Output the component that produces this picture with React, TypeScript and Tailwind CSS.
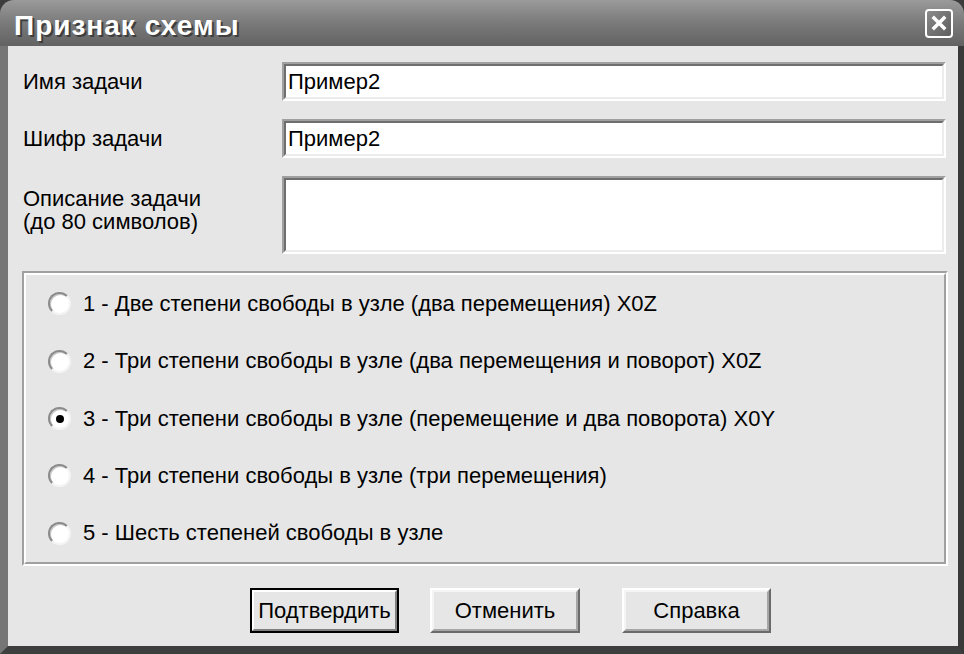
import React from 'react';

const font = { fontFamily: '"Liberation Sans", "DejaVu Sans", sans-serif' };

function Sunken({ children, className = '' }: { children?: React.ReactNode; className?: string }) {
    return (
        <div className={`border-2 border-t-[#a0a0a0] border-l-[#a0a0a0] border-b-white border-r-white ${className}`}>
            <div className="h-full border-2 border-t-[#6e6e6e] border-l-[#6e6e6e] border-b-[#ececec] border-r-[#ececec] bg-white flex items-center px-[2px]">
                {children}
            </div>
        </div>
    );
}

function Radio({ label, checked }: { label: string; checked?: boolean }) {
    return (
        <div className="h-[59px] flex items-center pl-[22px]">
            <div className="w-[23px] h-[23px] rounded-full border-2 border-t-[#8a8a8a] border-l-[#8a8a8a] border-b-[#f4f4f4] border-r-[#f4f4f4] bg-white flex items-center justify-center shadow-[inset_1px_1px_0_#c8c8c8]">
                {checked && <div className="w-[8px] h-[8px] rounded-full bg-black" />}
            </div>
            <span className="ml-[12px] text-[22px] text-black leading-none">{label}</span>
        </div>
    );
}

function Button({ label, isDefault, className = '' }: { label: string; isDefault?: boolean; className?: string }) {
    if (isDefault) {
        return (
            <div className={`h-[45px] border-2 border-black ${className}`}>
                <div className="h-full border-2 border-t-white border-l-white border-b-[#808080] border-r-[#808080] bg-[#e6e6e6] flex items-center justify-center text-[22px]">
                    {label}
                </div>
            </div>
        );
    }
    return (
        <div className={`h-[45px] border-2 border-t-white border-l-white border-b-[#6a6a6a] border-r-[#6a6a6a] ${className}`}>
            <div className="h-full border-2 border-t-[#f4f4f4] border-l-[#f4f4f4] border-b-[#a6a6a6] border-r-[#a6a6a6] bg-[#e6e6e6] flex items-center justify-center text-[22px]">
                {label}
            </div>
        </div>
    );
}

export default function App() {
    const options = [
        '1 - Две степени свободы в узле (два перемещения) X0Z',
        '2 - Три степени свободы в узле (два перемещения и поворот) X0Z',
        '3 - Три степени свободы в узле (перемещение и два поворота) X0Y',
        '4 - Три степени свободы в узле (три перемещения)',
        '5 - Шесть степеней свободы в узле',
    ];

    return (
        <div className="w-[964px] h-[654px] flex flex-col bg-[#3c3c3c] text-black overflow-hidden" style={font}>
            {/* title bar */}
            <div className="h-[46px] flex items-center rounded-t-[14px] bg-gradient-to-b from-[#9a9a9a] via-[#7a7a7a] to-[#626262] pl-[14px] pr-[11px]">
                <span className="text-white font-bold text-[28px] tracking-[1px] leading-none pt-[6px] [text-shadow:2px_2px_0_#3e3e3e] flex-1">
                    Признак схемы
                </span>
                <div className="w-[28px] h-[29px] rounded-[4px] border-2 border-white bg-gradient-to-br from-[#8a8a8a] to-[#5e5e5e] flex items-center justify-center">
                    <svg width="16" height="16" viewBox="0 0 16 16">
                        <path d="M3 3 L13 13 M13 3 L3 13" stroke="white" strokeWidth="3.5" strokeLinecap="square" />
                    </svg>
                </div>
            </div>

            {/* body */}
            <div className="flex-1 flex border-l-[8px] border-l-[#767676] border-r-[6px] border-r-[#3a3a3a] border-b-[8px] border-b-[#3e3e3e]">
                <div className="flex-1 bg-[#e6e6e6] pt-[16px] pl-[14px] pr-[12px] flex flex-col">
                    <div className="flex items-center h-[39px]">
                        <div className="w-[260px] pl-[1px] text-[22px]">Имя задачи</div>
                        <Sunken className="flex-1 h-[39px]">
                            <span className="text-[22px]">Пример2</span>
                        </Sunken>
                    </div>
                    <div className="flex items-center h-[39px] mt-[18px]">
                        <div className="w-[260px] pl-[1px] text-[22px]">Шифр задачи</div>
                        <Sunken className="flex-1 h-[39px]">
                            <span className="text-[22px]">Пример2</span>
                        </Sunken>
                    </div>
                    <div className="flex items-start h-[78px] mt-[18px]">
                        <div className="w-[260px] pl-[1px] pt-[11px] text-[22px] leading-[23px]">
                            Описание задачи
                            <br />
                            (до 80 символов)
                        </div>
                        <Sunken className="flex-1 h-[78px]" />
                    </div>

                    {/* group box */}
                    <div className="mt-[17px] h-[295px] border-2 border-t-[#a0a0a0] border-l-[#a0a0a0] border-b-white border-r-white mr-[-2px]">
                        <div className="h-full border-2 border-t-white border-l-white border-b-[#a0a0a0] border-r-[#a0a0a0] flex flex-col justify-center">
                            {options.map((o, i) => (
                                <Radio key={i} label={o} checked={i === 2} />
                            ))}
                        </div>
                    </div>

                    {/* buttons */}
                    <div className="flex mt-[22px] pl-[228px]">
                        <Button label="Подтвердить" isDefault className="w-[149px]" />
                        <Button label="Отменить" className="w-[150px] ml-[31px]" />
                        <Button label="Справка" className="w-[149px] ml-[42px]" />
                    </div>
                </div>
            </div>
        </div>
    );
}
